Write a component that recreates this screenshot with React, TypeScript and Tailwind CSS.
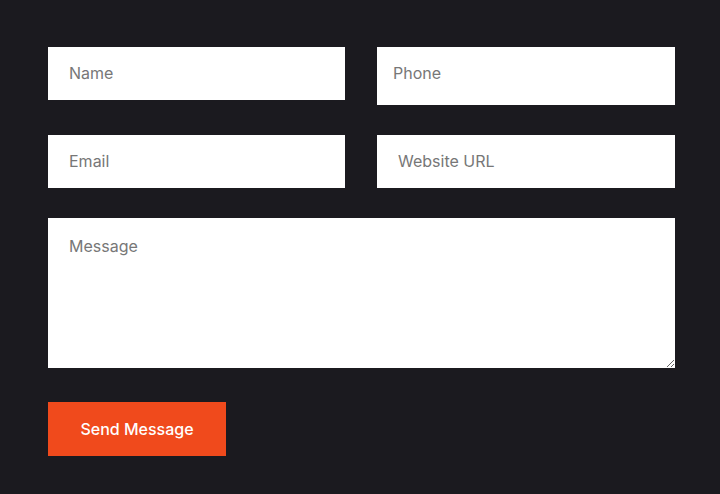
export default function App() {
  const field =
    "h-[53px] w-full bg-white px-[21px] pb-[2px] text-[16px] text-[#222] placeholder:text-[#777] outline-none";
  return (
    <div className="min-h-[494px] w-[720px] bg-[#1b1a1f] pl-[48px] pr-[45px] pt-[47px] font-['Inter',sans-serif]">
      <form className="flex flex-col">
        <div className="grid grid-cols-[297px_298px] gap-x-[32px] gap-y-[30px] items-start">
          <input type="text" placeholder="Name" className={field} />
          <input
            type="tel"
            placeholder="Phone"
            className="h-[58px] w-full bg-white px-[16px] pb-[7px] text-[16px] text-[#222] placeholder:text-[#777] outline-none"
          />
          <input type="email" placeholder="Email" className={field} />
          <input type="url" placeholder="Website URL" className={field} />
        </div>
        <textarea
          placeholder="Message"
          className="mt-[30px] h-[150px] w-[627px] bg-white px-[21px] pt-[16px] text-[16px] text-[#222] placeholder:text-[#777] outline-none"
        />
        <div className="mt-[34px]">
          <button
            type="button"
            className="h-[54px] w-[178px] bg-[#f04a1c] text-[16px] font-medium text-white"
          >
            Send Message
          </button>
        </div>
      </form>
    </div>
  );
}
